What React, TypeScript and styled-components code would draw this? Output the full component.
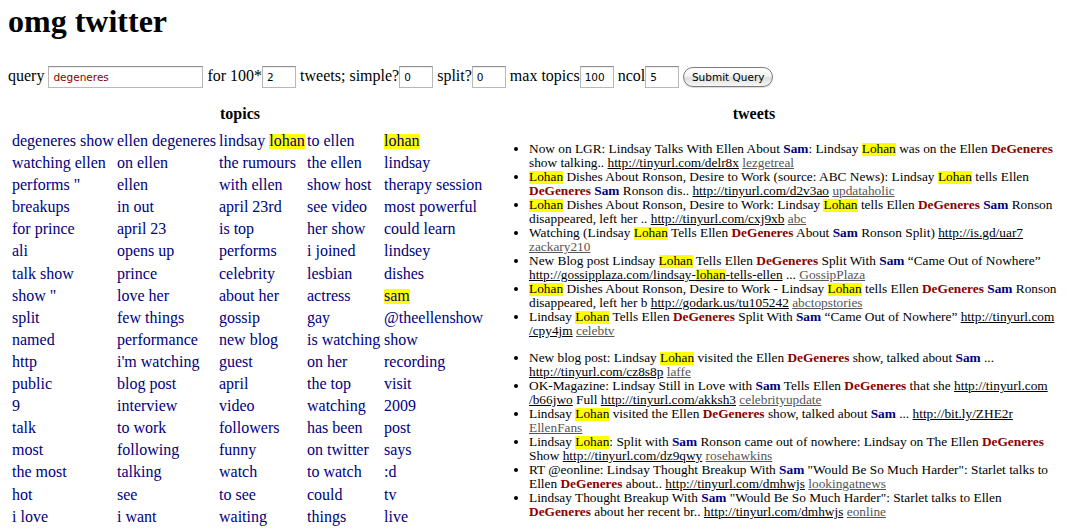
import React from 'react'
import styled, { createGlobalStyle } from 'styled-components'

const GlobalStyle = createGlobalStyle`
    body {
        margin: 0;
        padding: 3px 8px 8px;
        background: #fff;
        color: #000;
        font-family: "Liberation Serif", "Times New Roman", serif;
        font-size: 16px;
    }
`

const Title = styled.h1`
    margin: 0;
    font-size: 32px;
    line-height: 37px;
    font-weight: bold;
`

const QueryForm = styled.form`
    margin: 26px 0 0;
    line-height: 18px;
    white-space: nowrap;
`

const Field = styled.input<{ $width: number; $tint?: string }>`
    box-sizing: border-box;
    width: ${p => p.$width}px;
    height: 22px;
    margin: 0;
    padding: 0 4px;
    border: 1px solid #b8b8b8;
    border-top-color: #8f8f8f;
    box-shadow: inset 0 1px 1px rgba(0, 0, 0, 0.08);
    background: #fff;
    color: ${p => p.$tint || '#000'};
    font-family: "DejaVu Sans", sans-serif;
    font-size: 10.5px;
    vertical-align: baseline;
    outline: none;
`

const SubmitButton = styled.button`
    box-sizing: border-box;
    width: 90px;
    height: 20px;
    margin: 0;
    padding: 0;
    border: 1px solid #7c7c7c;
    border-radius: 10px;
    background: linear-gradient(#ffffff, #f3f3f3 45%, #dedede 55%, #f7f7f7);
    box-shadow: 0 1px 1px rgba(0, 0, 0, 0.15);
    color: #000;
    font-family: "DejaVu Sans", sans-serif;
    font-size: 10.5px;
`

const Columns = styled.div`
    display: grid;
    grid-template-columns: 464px 564px;
    margin-top: 17px;
`

const Column = styled.section``

const Heading = styled.h2`
    margin: 0;
    font-size: 16px;
    line-height: 18px;
    font-weight: bold;
    text-align: center;
`

const TopicGrid = styled.div`
    display: grid;
    grid-template-columns: 105px 102px 88px 77px auto;
    row-gap: 4.1px;
    margin: 9px 0 0 4px;
    line-height: 18px;
    color: #000080;
`

const Topic = styled.span`
    white-space: nowrap;
`

// yellow box spans roughly one em, like the old Times content area
const Mark = styled.span`
    background: linear-gradient(transparent 0.14em, #ffff00 0.14em);
`

const TweetList = styled.ul`
    margin: 0 0 13px;
    padding-left: 57px;
    font-size: 13.33px;
    line-height: 14px;
    &:first-of-type {
        margin-top: 19px;
    }
`

const Tweet = styled.li`
    white-space: nowrap;
`

const SamName = styled.b`
    color: #000080;
`

const DegName = styled.b`
    color: #8b0000;
`

const Url = styled.a`
    color: #000;
    text-decoration: underline;
`

const User = styled.a`
    color: #555;
    text-decoration: underline;
`

const Lohan = () => <Mark>Lohan</Mark>
const Sam = () => <SamName>Sam</SamName>
const DeGeneres = () => <DegName>DeGeneres</DegName>

const topics: string[][] = [
    ['degeneres show', 'ellen degeneres', 'lindsay lohan', 'to ellen', 'lohan'],
    ['watching ellen', 'on ellen', 'the rumours', 'the ellen', 'lindsay'],
    ['performs "', 'ellen', 'with ellen', 'show host', 'therapy session'],
    ['breakups', 'in out', 'april 23rd', 'see video', 'most powerful'],
    ['for prince', 'april 23', 'is top', 'her show', 'could learn'],
    ['ali', 'opens up', 'performs', 'i joined', 'lindsey'],
    ['talk show', 'prince', 'celebrity', 'lesbian', 'dishes'],
    ['show "', 'love her', 'about her', 'actress', 'sam'],
    ['split', 'few things', 'gossip', 'gay', '@theellenshow'],
    ['named', 'performance', 'new blog', 'is watching', 'show'],
    ['http', "i'm watching", 'guest', 'on her', 'recording'],
    ['public', 'blog post', 'april', 'the top', 'visit'],
    ['9', 'interview', 'video', 'watching', '2009'],
    ['talk', 'to work', 'followers', 'has been', 'post'],
    ['most', 'following', 'funny', 'on twitter', 'says'],
    ['the most', 'talking', 'watch', 'to watch', ':d'],
    ['hot', 'see', 'to see', 'could', 'tv'],
    ['i love', 'i want', 'waiting', 'things', 'live'],
]

const highlighted = ['lohan', 'sam']

const TopicText = ({ text }: { text: string }) => {
    const words = text.split(' ')
    return (
        <>
            {words.map((w, i) => (
                <React.Fragment key={i}>
                    {i > 0 && ' '}
                    {highlighted.includes(w) ? <Mark>{w}</Mark> : w}
                </React.Fragment>
            ))}
        </>
    )
}

const App = () => {
    return (
        <>
            <GlobalStyle />
            <Title>omg twitter</Title>

            <QueryForm onSubmit={e => e.preventDefault()}>
                query <Field $width={155} $tint="#8b0000" defaultValue="degeneres" /> for 100*<Field $width={34} defaultValue="2" /> tweets; simple?<Field $width={34} defaultValue="0" /> split?<Field $width={34} defaultValue="0" /> max topics<Field $width={34} defaultValue="100" /> ncol<Field $width={34} defaultValue="5" /> <SubmitButton type="submit">Submit Query</SubmitButton>
            </QueryForm>

            <Columns>
                <Column>
                    <Heading>topics</Heading>
                    <TopicGrid>
                        {topics.flat().map((t, i) => (
                            <Topic key={i}><TopicText text={t} /></Topic>
                        ))}
                    </TopicGrid>
                </Column>

                <Column>
                    <Heading>tweets</Heading>
                    <TweetList>
                        <Tweet>
                            Now on LGR: Lindsay Talks With Ellen About <Sam />: Lindsay <Lohan /> was on the Ellen <DeGeneres /><br />
                            show talking.. <Url href="#">http://tinyurl.com/delr8x</Url> <User href="#">lezgetreal</User>
                        </Tweet>
                        <Tweet>
                            <Lohan /> Dishes About Ronson, Desire to Work (source: ABC News): Lindsay <Lohan /> tells Ellen<br />
                            <DeGeneres /> <Sam /> Ronson dis.. <Url href="#">http://tinyurl.com/d2v3ao</Url> <User href="#">updataholic</User>
                        </Tweet>
                        <Tweet>
                            <Lohan /> Dishes About Ronson, Desire to Work: Lindsay <Lohan /> tells Ellen <DeGeneres /> <Sam /> Ronson<br />
                            disappeared, left her .. <Url href="#">http://tinyurl.com/cxj9xb</Url> <User href="#">abc</User>
                        </Tweet>
                        <Tweet>
                            Watching (Lindsay <Lohan /> Tells Ellen <DeGeneres /> About <Sam /> Ronson Split) <Url href="#">http://is.gd/uar7</Url><br />
                            <User href="#">zackary210</User>
                        </Tweet>
                        <Tweet>
                            New Blog post Lindsay <Lohan /> Tells Ellen <DeGeneres /> Split With <Sam /> “Came Out of Nowhere”<br />
                            <Url href="#">http://gossipplaza.com/lindsay-<Mark>lohan</Mark>-tells-ellen</Url> ... <User href="#">GossipPlaza</User>
                        </Tweet>
                        <Tweet>
                            <Lohan /> Dishes About Ronson, Desire to Work - Lindsay <Lohan /> tells Ellen <DeGeneres /> <Sam /> Ronson<br />
                            disappeared, left her b <Url href="#">http://godark.us/tu105242</Url> <User href="#">abctopstories</User>
                        </Tweet>
                        <Tweet>
                            Lindsay <Lohan /> Tells Ellen <DeGeneres /> Split With <Sam /> “Came Out of Nowhere” <Url href="#">http://tinyurl.com<br />/cpy4jm</Url> <User href="#">celebtv</User>
                        </Tweet>
                    </TweetList>

                    <TweetList>
                        <Tweet>
                            New blog post: Lindsay <Lohan /> visited the Ellen <DeGeneres /> show, talked about <Sam /> ...<br />
                            <Url href="#">http://tinyurl.com/cz8s8p</Url> <User href="#">laffe</User>
                        </Tweet>
                        <Tweet>
                            OK-Magazine: Lindsay Still in Love with <Sam /> Tells Ellen <DeGeneres /> that she <Url href="#">http://tinyurl.com<br />/b66jwo</Url> Full <Url href="#">http://tinyurl.com/akksh3</Url> <User href="#">celebrityupdate</User>
                        </Tweet>
                        <Tweet>
                            Lindsay <Lohan /> visited the Ellen <DeGeneres /> show, talked about <Sam /> ... <Url href="#">http://bit.ly/ZHE2r</Url><br />
                            <User href="#">EllenFans</User>
                        </Tweet>
                        <Tweet>
                            Lindsay <Lohan />: Split with <Sam /> Ronson came out of nowhere: Lindsay on The Ellen <DeGeneres /><br />
                            Show <Url href="#">http://tinyurl.com/dz9qwy</Url> <User href="#">rosehawkins</User>
                        </Tweet>
                        <Tweet>
                            RT @eonline: Lindsay Thought Breakup With <Sam /> "Would Be So Much Harder": Starlet talks to<br />
                            Ellen <DeGeneres /> about.. <Url href="#">http://tinyurl.com/dmhwjs</Url> <User href="#">lookingatnews</User>
                        </Tweet>
                        <Tweet>
                            Lindsay Thought Breakup With <Sam /> "Would Be So Much Harder": Starlet talks to Ellen<br />
                            <DeGeneres /> about her recent br.. <Url href="#">http://tinyurl.com/dmhwjs</Url> <User href="#">eonline</User>
                        </Tweet>
                    </TweetList>
                </Column>
            </Columns>
        </>
    )
}

export default App
